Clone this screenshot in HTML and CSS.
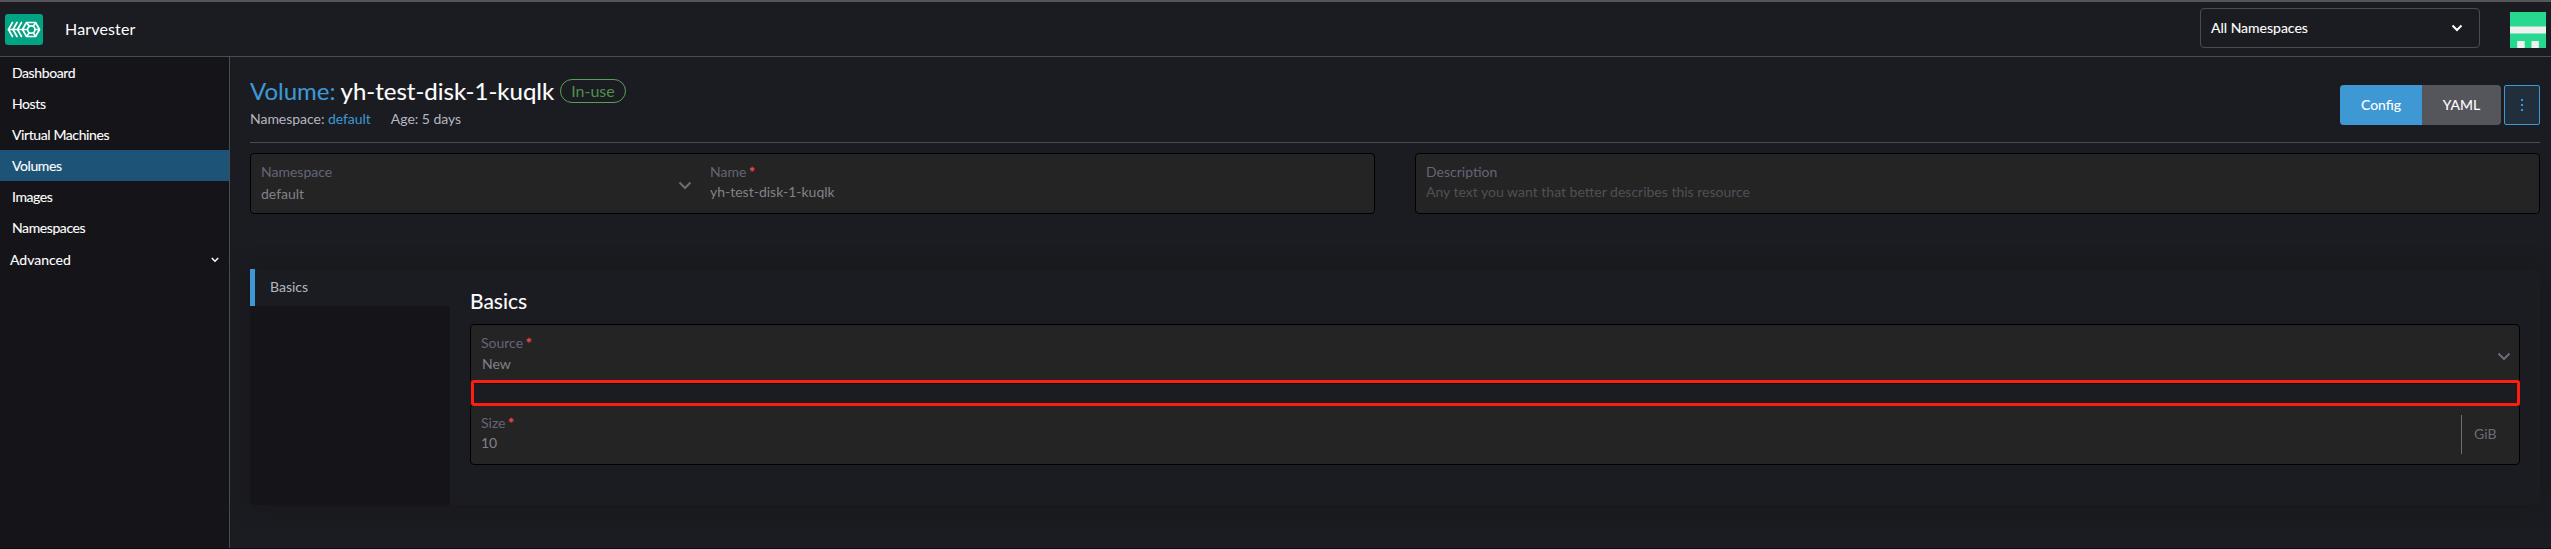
FILE: index.html
```
<!DOCTYPE html>
<html lang="en">
<head>
<meta charset="utf-8">
<title>Harvester</title>
<link rel="stylesheet" href="styles.css">
</head>
<body>
<div class="app">
  <header class="top">
    <svg class="logo" width="38" height="31" viewBox="0 0 38 31"><rect width="38" height="31" rx="3" fill="#00a383"/><g fill="none" stroke="#fff" stroke-width="1.7" stroke-linecap="round" stroke-linejoin="round"><path d="M7.500 8.500L3.500 15.500L7.500 22.500M12 8.500L8 15.500L12 22.500M16.500 8.500L12.500 15.500L16.500 22.500M21.500 8.500L17.500 15.500L21.500 22.500H30.500L34.500 15.500L30.500 8.500Z"/><path d="M3.500 15.500H22"/><circle cx="26.300" cy="15.500" r="3.700"/><path d="M22 9L24.300 12.300M30.500 9L28.300 12.300M22 22L24.300 18.700M30.500 22L28.300 18.700M30 15.500H34"/></g></svg>
    <div class="product">Harvester</div>
    <div class="ns-filter"><span>All Namespaces</span><svg width="12" height="8" viewBox="0 0 12 8"><path d="M1.500 1.500L6 6L10.500 1.500" fill="none" stroke="#fff" stroke-width="2"/></svg></div>
    <svg class="avatar" width="36" height="36" viewBox="0 0 36 36"><rect width="36" height="36" fill="#26d98e"/><path d="M0 14.500H36V21.500H0ZM7.200 29H14.700V36H7.200ZM21.500 29H28.800V36H21.500Z" fill="#f0f0f0"/></svg>
  </header>
  <div class="body">
    <nav class="side">
      <a>Dashboard</a><a>Hosts</a><a>Virtual Machines</a><a class="current">Volumes</a><a>Images</a><a>Namespaces</a>
      <div class="group"><span>Advanced</span><svg width="8" height="6" viewBox="0 0 8 6"><path d="M.8 1L4 4.200L7.200 1" fill="none" stroke="#fff" stroke-width="1.500"/></svg></div>
    </nav>
    <main class="main">
      <div class="masthead">
        <div class="titles">
          <h1><span class="kind">Volume:</span> <span>yh-test-disk-1-kuqlk</span><span class="badge">In-use</span></h1>
          <div class="meta"><span>Namespace: <span class="link">default</span></span><span>Age: 5 days</span></div>
        </div>
        <div class="actions">
          <div class="toggle"><span class="on">Config</span><span>YAML</span></div>
          <div class="more"><svg width="4" height="14" viewBox="0 0 4 14"><path d="M1 1h2v2H1ZM1 6h2v2H1ZM1 11h2v2H1Z" fill="#3d98d3"/></svg></div>
        </div>
      </div>
      <div class="name-row">
        <div class="field pair">
          <div class="part ns"><div><label>Namespace</label><div class="value low">default</div></div><svg class="chev" width="14" height="9" viewBox="0 0 14 9"><path d="M1.500 1.500L7 7L12.500 1.500" fill="none" stroke="#6c6c76" stroke-width="2"/></svg></div>
          <div class="part"><div><label>Name <i>*</i></label><div class="value">yh-test-disk-1-kuqlk</div></div></div>
        </div>
        <div class="field desc"><label>Description</label><div class="value placeholder">Any text you want that better describes this resource</div></div>
      </div>
      <div class="tabs">
        <div class="tablist"><div class="tab">Basics</div></div>
        <section class="panel">
          <h3>Basics</h3>
          <div class="stack">
            <div class="field source"><div><label>Source <i>*</i></label><div class="value inset">New</div></div><svg class="chev" width="14" height="9" viewBox="0 0 14 9"><path d="M1.500 1.500L7 7L12.500 1.500" fill="none" stroke="#6c6c76" stroke-width="2"/></svg></div>
            <div class="field size"><div><label>Size <i>*</i></label><div class="value">10</div></div><div class="unit">GiB</div></div>
            <div class="highlight"></div>
          </div>
        </section>
      </div>
    </main>
  </div>
</div>
</body>
</html>
```
FILE: styles.css
```
* { box-sizing: border-box; }
body { margin: 0; background: #1b1c21; color: #fff; font: 14px/20px Lato, sans-serif; }
.app { height: 549px; display: flex; flex-direction: column; overflow: hidden; border-bottom: 1px solid #0c0b10; }
.top { height: 57px; flex: none; display: flex; align-items: flex-start; border-bottom: 1px solid #4a4b52; border-top: 2px solid #55555a; padding-left: 5px; }
.logo { margin-top: 12px; }
.product { margin: 17px auto 0 22px; font-size: 16px; letter-spacing: .15px; }
.ns-filter { width: 280px; height: 40px; margin-top: 6px; border: 1px solid #4a4b52; border-radius: 4px; display: flex; align-items: center; justify-content: space-between; padding: 0 16px 0 10px; }
.ns-filter, .side, .toggle, h3 { -webkit-text-stroke: .1px; }
.avatar { margin: 10px 5px 0 30px; }
.body { flex: 1; display: flex; min-height: 0; }
.side { width: 230px; background: #141419; border-right: 1px solid #4a4b52; display: flex; flex-direction: column; }
.side a { height: 31px; padding: 6px 12px; letter-spacing: -.4px; }
.side .current { background: #1d5377; }
.group { height: 34px; display: flex; align-items: center; justify-content: space-between; padding: 0 10px; }
.main { flex: 1; padding: 19px 11px 0 20px; }
.masthead { height: 67px; display: flex; justify-content: space-between; border-bottom: 1px solid #4a4b52; }
h1 { margin: 0; height: 30px; font: 24px/30px Lato, sans-serif; display: flex; gap: 6px; align-items: center; white-space: pre; -webkit-text-stroke: .1px; }
.kind { margin-right: -1px; }
.kind, .link { color: #3d98d3; }
.badge { height: 24px; border: 1px solid #5a9f58; border-radius: 12px; color: #4c914a; font-size: 16px; line-height: 22px; padding: 0 10px; -webkit-text-stroke: 0; }
.meta { display: flex; gap: 20px; color: #b6b6c2; margin-top: 3px; letter-spacing: -.03px; }
.actions { display: flex; gap: 3px; padding-top: 9px; }
.toggle { display: flex; height: 40px; border-radius: 4px; overflow: hidden; background: #55565c; line-height: 40px; text-align: center; }
.toggle span { width: 79px; }
.toggle .on { width: 82px; background: #3d98d3; }
.more { width: 36px; height: 40px; border: 1px solid #3d98d3; border-radius: 2px; background: #212f3c; display: flex; align-items: center; justify-content: center; }
.name-row { display: grid; grid-template-columns: 1fr 1fr; gap: 40px; margin-top: 10px; }
.field { background: #242425; border: 1px solid #000; border-radius: 4px; height: 61px; padding: 8px 10px; }
label { display: block; color: #656578; line-height: 20px; }
label i { color: #f64747; font-style: normal; -webkit-text-stroke: .3px; margin-left: -1px; }
.value { color: #828286; line-height: 20px; }
.low { padding-top: 2px; }
.inset { padding: 1px 0 0 1px; }
.placeholder { color: #505055; }
.pair { display: flex; }
.part { flex: 1; display: flex; align-items: flex-start; }
.ns { flex: none; width: 449px; justify-content: space-between; padding-right: 18px; }
.chev { margin-top: 19px; }
.tabs { margin-top: 55px; height: 236px; display: flex; border-radius: 5px; box-shadow: 0 0 20px #17171b; }
.tablist { width: 200px; background: #141419; border-radius: 0 0 0 5px; }
.tab { height: 37px; background: #1b1c21; border-left: 5px solid #3d98d3; padding: 8px 15px; color: #b6b6c2; }
.panel { flex: 1; padding: 19px 20px 0; }
h3 { margin: 0; font: 21px/26px Lato, sans-serif; }
.stack { position: relative; margin-top: 10px; display: flex; flex-direction: column; gap: 20px; }
.source, .size { display: flex; justify-content: space-between; }
.source { height: 60px; padding-right: 8px; }
.unit { width: 48px; height: 39px; margin-top: 2px; border-left: 1px solid #6c6c76; color: #6c6c76; line-height: 37px; padding-left: 12px; }
.highlight { position: absolute; left: 1px; right: 0; top: 56px; height: 26px; border: 3px solid #ff1d10; border-radius: 3px; }
```
